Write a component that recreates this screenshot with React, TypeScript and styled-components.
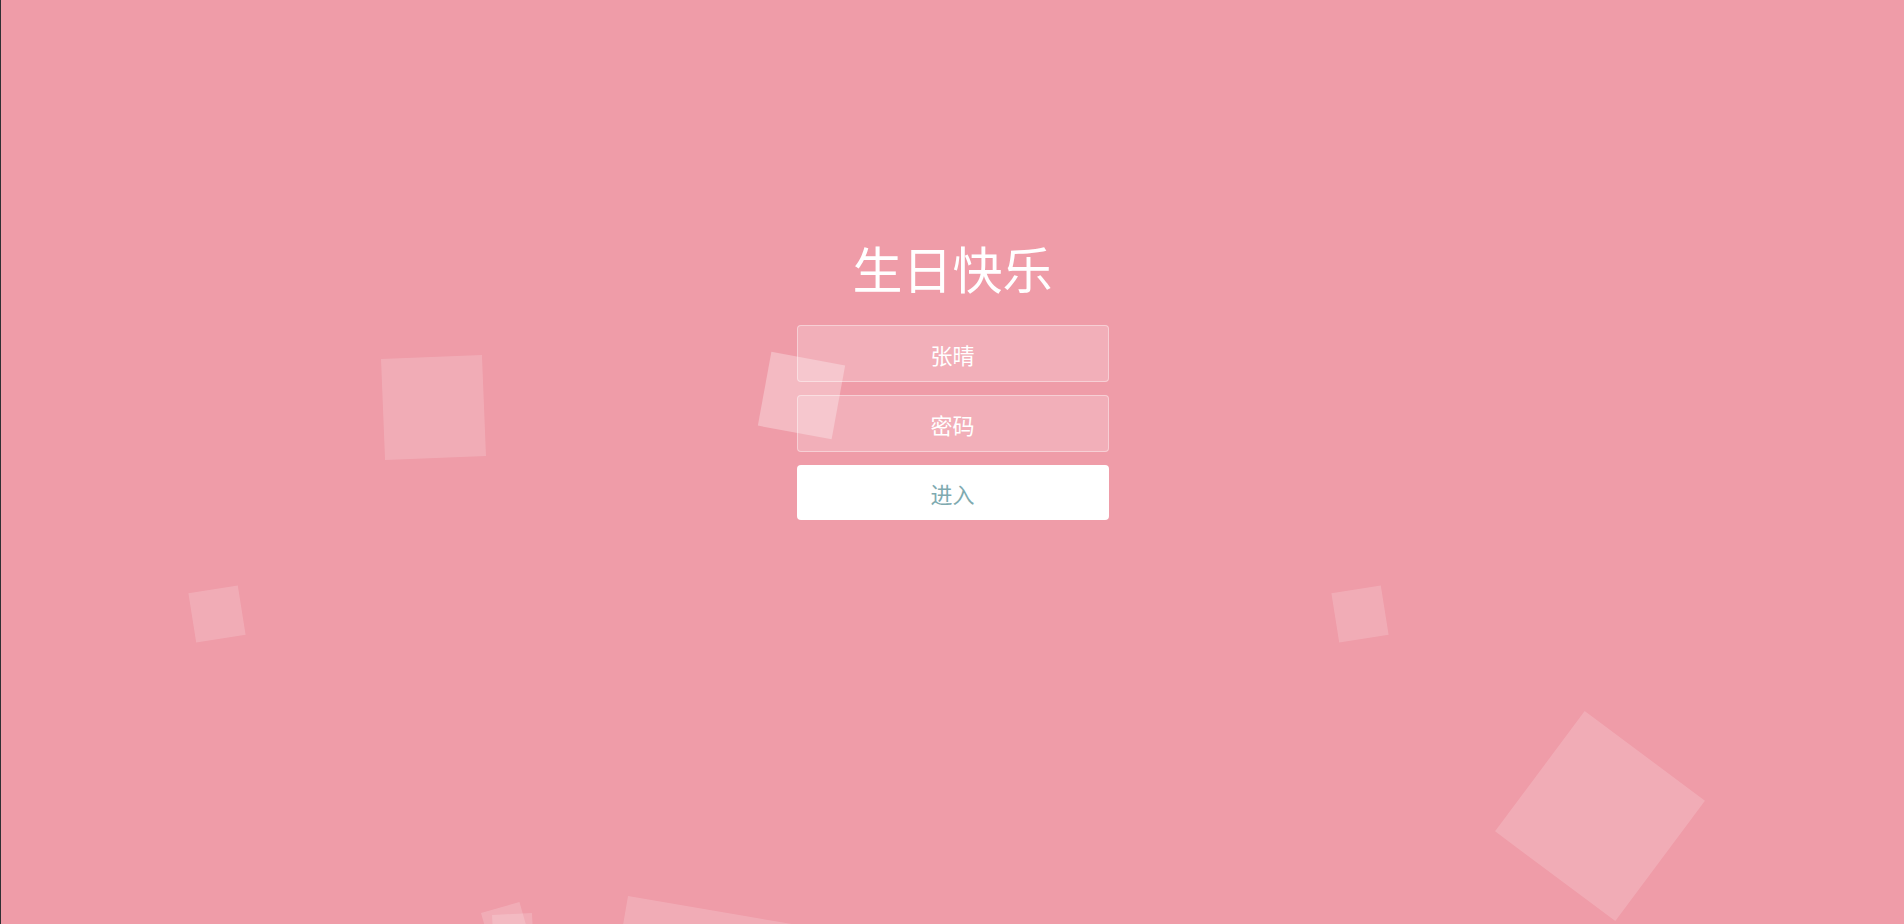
import React from "react";
import styled, { createGlobalStyle } from "styled-components";

const GlobalStyle = createGlobalStyle`
  html, body {
    margin: 0;
    padding: 0;
    height: 100%;
    overflow: hidden;
  }
  body {
    background: #ef9ca8;
    font-family: "Noto Sans CJK SC", "Noto Sans", sans-serif;
  }
`;

const Page = styled.div`
  position: relative;
  width: 1904px;
  height: 924px;
  overflow: hidden;
  background: #ef9ca8;
  border-left: 1px solid #2f3033;
  box-sizing: border-box;
`;

const Container = styled.div`
  position: relative;
  z-index: 2;
  display: flex;
  flex-direction: column;
  align-items: center;
  padding-top: 237px;
`;

const Title = styled.h1`
  margin: 0 0 28px;
  height: 60px;
  line-height: 60px;
  font-size: 50px;
  font-weight: 400;
  color: #ffffff;
  letter-spacing: 0;
`;

const Form = styled.form`
  display: flex;
  flex-direction: column;
  align-items: center;
  gap: 13px;
  margin: 0;
`;

const Field = styled.input`
  box-sizing: border-box;
  width: 312px;
  height: 57px;
  padding: 0 19px;
  border: 1px solid rgba(255, 255, 255, 0.4);
  background: rgba(255, 255, 255, 0.2);
  border-radius: 4px;
  text-align: center;
  font-family: "Noto Sans CJK SC", "Noto Sans", sans-serif;
  font-size: 22px;
  font-weight: 400;
  color: #ffffff;
  outline: none;
  &::placeholder {
    color: #ffffff;
    opacity: 1;
  }
`;

const Submit = styled.button`
  box-sizing: border-box;
  width: 312px;
  height: 55px;
  border: 0;
  border-radius: 4px;
  background: #ffffff;
  font-family: "Noto Sans CJK SC", "Noto Sans", sans-serif;
  font-size: 22px;
  font-weight: 400;
  color: #7eaab0;
  cursor: pointer;
`;

const Bubble = styled.div<{ $size: number }>`
  position: absolute;
  z-index: 1;
  width: ${(p) => p.$size}px;
  height: ${(p) => p.$size}px;
  background: rgba(255, 255, 255, 0.17);
`;

const bubbles = [
  { cx: 432, cy: 407, size: 101, rot: -2.3 },
  { cx: 216, cy: 613.5, size: 50, rot: -9 },
  { cx: 1359, cy: 613.5, size: 50, rot: -9 },
  { cx: 1598.5, cy: 815.5, size: 150, rot: 36.7 },
  { cx: 800.4, cy: 395.8, size: 75, rot: 10.4, alpha: 0.3 },
  { x: 627, y: 896, size: 170, rot: 9.7 },
  { x: 480, y: 913, size: 40, rot: -16 },
  { x: 491, y: 915, size: 40, rot: -3 },
];

export default function App() {
  return (
    <>
      <GlobalStyle />
      <Page>
        {bubbles.map((b, i) => {
          const left = b.cx !== undefined ? b.cx - b.size / 2 : (b as any).x;
          const top = b.cy !== undefined ? b.cy - b.size / 2 : (b as any).y;
          const origin = b.cx !== undefined ? "50% 50%" : "0 0";
          return (
            <Bubble
              key={i}
              $size={b.size}
              style={{
                left,
                top,
                transform: `rotate(${b.rot}deg)`,
                transformOrigin: origin,
                background: b.alpha ? `rgba(255,255,255,${b.alpha})` : undefined,
              }}
            />
          );
        })}
        <Container>
          <Title>生日快乐</Title>
          <Form onSubmit={(e) => e.preventDefault()}>
            <Field type="text" placeholder="张晴" />
            <Field type="password" placeholder="密码" />
            <Submit type="submit">进入</Submit>
          </Form>
        </Container>
      </Page>
    </>
  );
}
